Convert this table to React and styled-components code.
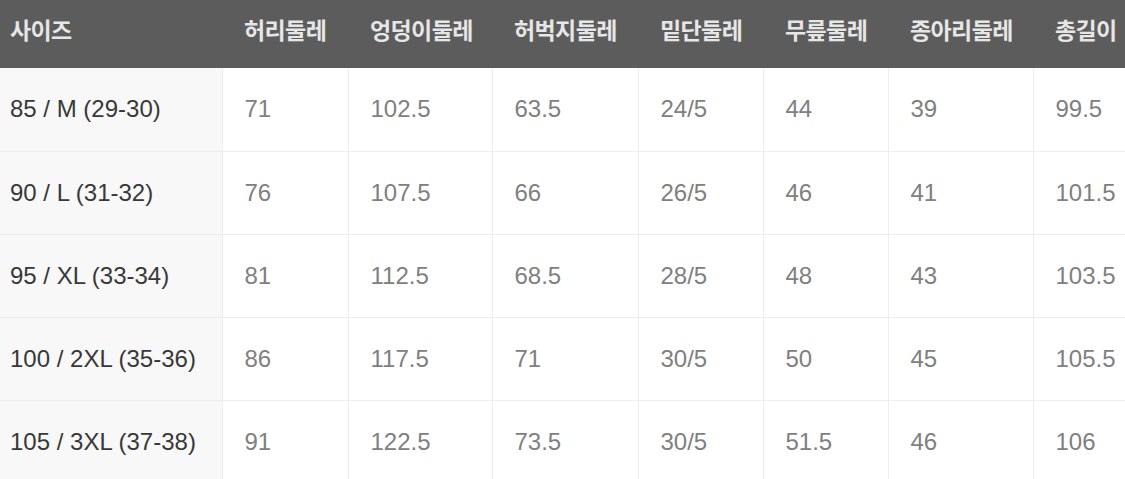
import React from 'react';
import styled, { createGlobalStyle } from 'styled-components';

const GlobalStyle = createGlobalStyle`
  html, body {
    margin: 0;
    padding: 0;
    background: #ffffff;
    overflow: hidden;
  }
  body {
    font-family: "Liberation Sans", "Noto Sans CJK KR", sans-serif;
  }
`;

const Table = styled.table`
  width: 1125px;
  border-collapse: collapse;
  table-layout: fixed;
`;

const HeadRow = styled.tr`
  background: #5c5c5c;
  height: 68px;
`;

const HeadCell = styled.th`
  color: #e6e6e6;
  font-family: "Noto Sans CJK KR", "Liberation Sans", sans-serif;
  font-size: 23px;
  font-weight: 700;
  text-align: left;
  padding: 0 0 10px ${(p) => (p.$first ? '10px' : '22px')};
  white-space: nowrap;
  letter-spacing: -0.6px;
`;

const Row = styled.tr`
  height: 83px;
  border-bottom: 1px solid #ededed;
`;

const SizeCell = styled.td`
  background: #f8f8f8;
  color: #383838;
  font-size: 24px;
  padding: 0 0 0 10px;
  white-space: nowrap;
  border-right: 1px solid #ededed;
`;

const ValueCell = styled.td`
  color: #808080;
  font-size: 24px;
  padding: 0 0 0 22px;
  white-space: nowrap;
  border-right: 1px solid #ededed;

  &:last-child {
    border-right: none;
  }
`;

const widths = [222, 126, 144, 146, 125, 125, 145, 92];

const headers = ['사이즈', '허리둘레', '엉덩이둘레', '허벅지둘레', '밑단둘레', '무릎둘레', '종아리둘레', '총길이'];

const rows = [
  ['85 / M (29-30)', '71', '102.5', '63.5', '24/5', '44', '39', '99.5'],
  ['90 / L (31-32)', '76', '107.5', '66', '26/5', '46', '41', '101.5'],
  ['95 / XL (33-34)', '81', '112.5', '68.5', '28/5', '48', '43', '103.5'],
  ['100 / 2XL (35-36)', '86', '117.5', '71', '30/5', '50', '45', '105.5'],
  ['105 / 3XL (37-38)', '91', '122.5', '73.5', '30/5', '51.5', '46', '106'],
];

export default function App() {
  return (
    <>
      <GlobalStyle />
      <Table>
        <colgroup>
          {widths.map((w, i) => (
            <col key={i} style={{ width: w }} />
          ))}
        </colgroup>
        <thead>
          <HeadRow>
            {headers.map((h, i) => (
              <HeadCell key={h} $first={i === 0}>
                {h}
              </HeadCell>
            ))}
          </HeadRow>
        </thead>
        <tbody>
          {rows.map((r) => (
            <Row key={r[0]}>
              <SizeCell>{r[0]}</SizeCell>
              {r.slice(1).map((v, i) => (
                <ValueCell key={i}>{v}</ValueCell>
              ))}
            </Row>
          ))}
        </tbody>
      </Table>
    </>
  );
}
